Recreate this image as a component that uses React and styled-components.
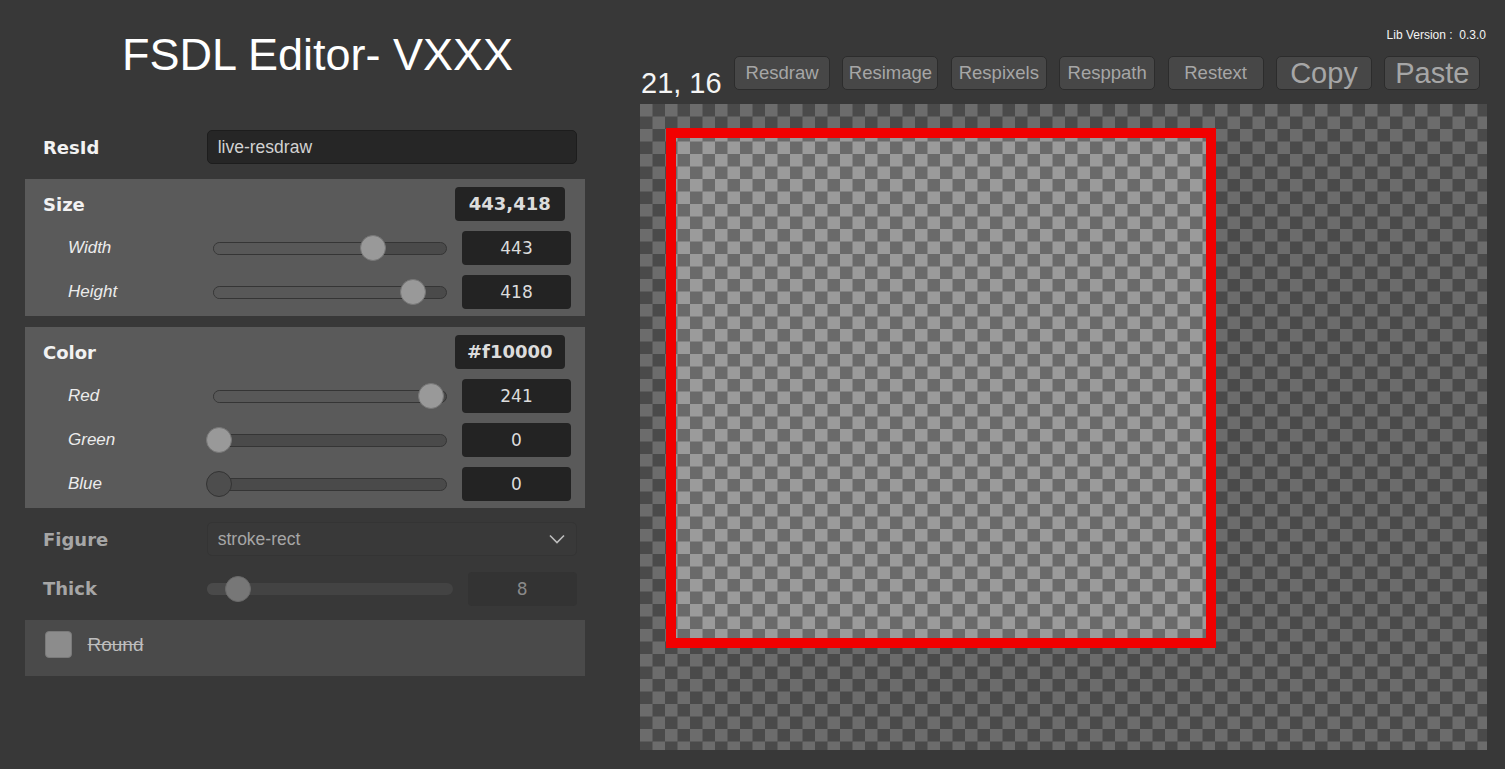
import React from "react"
import styled, { createGlobalStyle } from "styled-components"

const GlobalStyle = createGlobalStyle`
  html, body {
    margin: 0;
    padding: 0;
    background: #383838;
  }
  body {
    font-family: "Liberation Sans", Arial, sans-serif;
    color: #eee;
  }
`

const Page = styled.div`
  display: flex;
  width: 1505px;
  height: 769px;
  overflow: hidden;
`

const LeftColumn = styled.div`
  flex: 0 0 635px;
  width: 635px;
  padding-top: 32px;
  box-sizing: border-box;
`

const Title = styled.h1`
  margin: 0;
  height: 45px;
  font-family: "Liberation Sans", Arial, sans-serif;
  font-weight: normal;
  font-size: 45px;
  line-height: 45px;
  color: #fff;
  text-align: center;
`

const Form = styled.div`
  margin-top: 53px;
  padding: 0 50px 0 25px;
  display: flex;
  flex-direction: column;
`

const FieldRow = styled.div`
  display: flex;
  align-items: center;
  height: ${p => p.$height || 34}px;
  margin-top: ${p => p.$gap || 0}px;
  padding: 0 8.3px 0 18px;
`

const FieldLabel = styled.div`
  flex: 0 0 auto;
  width: 163.7px;
  font-family: "DejaVu Sans", sans-serif;
  font-weight: bold;
  font-size: 18px;
  color: ${p => (p.$muted ? "#a6a6a6" : "#f2f2f2")};
`

const TextInput = styled.div`
  flex: 0 0 auto;
  width: 370px;
  height: 34px;
  box-sizing: border-box;
  padding-left: 10px;
  background: #262626;
  border: 1px solid #1d1d1d;
  border-radius: 5px;
  font-size: 17.5px;
  line-height: 32px;
  color: #d2d2d2;
`

const Select = styled.div`
  flex: 0 0 auto;
  width: 370px;
  height: 34px;
  box-sizing: border-box;
  padding: 0 11px 0 10px;
  display: flex;
  align-items: center;
  justify-content: space-between;
  background: #393939;
  border: 1px solid #343434;
  border-radius: 5px;
  font-size: 17.5px;
  color: #a6a6a6;
`

const Panel = styled.section`
  margin-top: ${p => p.$gap}px;
  padding: 8px 14px 7px 18px;
  background: #5a5a5a;
  display: flex;
  flex-direction: column;
  gap: 10px;
`

const PanelHeader = styled.div`
  display: flex;
  align-items: center;
  justify-content: space-between;
  height: 34px;
  padding-right: 6.5px;
`

const SubRow = styled.div`
  display: flex;
  align-items: center;
  height: 34px;
  padding-left: 25px;
`

const SubLabel = styled.div`
  flex: 0 0 auto;
  width: 145px;
  font-style: italic;
  font-size: 17px;
  color: #ececec;
`

const ValueBox = styled.div`
  flex: 0 0 auto;
  width: ${p => (p.$head ? 109.5 : 109)}px;
  height: 34px;
  margin-left: ${p => p.$offset || 0}px;
  box-sizing: border-box;
  border-radius: 4px;
  background: ${p => (p.$muted ? "#333" : "#232323")};
  text-align: center;
  font-family: "DejaVu Sans", sans-serif;
  font-weight: ${p => (p.$head ? "bold" : "normal")};
  font-size: ${p => (p.$head ? 18 : 17)}px;
  line-height: 34px;
  color: ${p => (p.$muted ? "#8a8a8a" : "#dcdcdc")};
`

const Track = styled.div`
  position: relative;
  flex: 0 0 auto;
  width: ${p => p.$width}px;
  height: ${p => (p.$muted ? 12 : 13)}px;
  box-sizing: border-box;
  border-radius: 7px;
  background: ${p => (p.$muted ? "#434343" : "#4a4a4a")};
  border: ${p => (p.$muted ? "none" : "1px solid #353535")};
`

const TrackFill = styled.div`
  position: absolute;
  left: 0;
  top: 0;
  bottom: 0;
  border-radius: 7px;
  background: ${p => (p.$muted ? "#4a4a4a" : "#585858")};
`

const Thumb = styled.div`
  position: absolute;
  top: 50%;
  width: 26px;
  height: 26px;
  margin-top: -13px;
  box-sizing: border-box;
  border-radius: 50%;
  background: ${p => (p.$dark ? "#4d4d4d" : p.$muted ? "#777" : "#999")};
  border: 1px solid ${p => (p.$dark ? "#333" : p.$muted ? "#6a6a6a" : "#777")};
`

const RoundPanel = styled.section`
  margin-top: 14px;
  height: 56px;
  box-sizing: border-box;
  padding: 11px 20px 0 20px;
  background: #4a4a4a;
  display: flex;
  align-items: flex-start;
  gap: 15.5px;
`

const Checkbox = styled.div`
  width: 27px;
  height: 27px;
  box-sizing: border-box;
  border-radius: 4px;
  background: #8c8c8c;
  border: 1px solid #7a7a7a;
`

const CheckLabel = styled.span`
  font-size: 19px;
  line-height: 27px;
  color: #bdbdbd;
  text-decoration: line-through;
`

const RightColumn = styled.div`
  flex: 0 0 847px;
  width: 847px;
  margin-left: 5px;
  padding-top: 28px;
  display: flex;
  flex-direction: column;
`

const LibVersion = styled.div`
  font-size: 12px;
  line-height: 14px;
  color: #f4f4f4;
  text-align: right;
  padding-right: 1px;
  white-space: pre;
`

const Toolbar = styled.div`
  margin-top: 14px;
  display: flex;
  align-items: flex-start;
  gap: 12.4px;
`

const Coords = styled.div`
  padding-top: 13px;
  padding-left: 1px;
  margin-right: 0;
  font-size: 29px;
  line-height: 29px;
  color: #f4f4f4;
`

const ToolButton = styled.button`
  width: 96px;
  height: 34px;
  padding: 0;
  box-sizing: border-box;
  background: #474747;
  border: 1px solid #2c2c2c;
  border-radius: 5px;
  font-family: "Liberation Sans", Arial, sans-serif;
  font-size: ${p => (p.$big ? 29 : 18.5)}px;
  line-height: 32px;
  color: #a6a6a6;
  cursor: pointer;
`

const Canvas = styled.div`
  margin-top: 6px;
  width: 847px;
  height: 646px;
  line-height: 0;
`

const Chevron = () => (
  <svg width="16" height="10" viewBox="0 0 16 10">
    <polyline points="1,1.5 8,8.5 15,1.5" fill="none" stroke="#bdbdbd" strokeWidth="1.6" />
  </svg>
)

function Slider({ width, pos, muted, dark }) {
  const left = -8 + pos * (width - 22.5)
  return (
    <Track $width={width} $muted={muted}>
      <TrackFill $muted={muted} style={{ width: Math.max(0, left + 13) }} />
      <Thumb $muted={muted} $dark={dark} style={{ left }} />
    </Track>
  )
}

const sizeRows = [
  { label: "Width", value: 443, pos: 0.728 },
  { label: "Height", value: 418, pos: 0.918 },
]

const colorRows = [
  { label: "Red", value: 241, pos: 1 },
  { label: "Green", value: 0, pos: 0 },
  { label: "Blue", value: 0, pos: 0, dark: true },
]

const buttons = ["Resdraw", "Resimage", "Respixels", "Resppath", "Restext"]

function SliderRow({ row }) {
  return (
    <SubRow>
      <SubLabel>{row.label}</SubLabel>
      <Slider width={234} pos={row.pos} dark={row.dark} />
      <ValueBox $offset={15}>{row.value}</ValueBox>
    </SubRow>
  )
}

function DrawCanvas() {
  return (
    <svg width="847" height="646">
      <defs>
        <pattern id="checker" width="25" height="25" patternUnits="userSpaceOnUse">
          <rect width="25" height="25" fill="#6a6a6a" />
          <rect width="12.5" height="12.5" fill="#9b9b9b" />
          <rect x="12.5" y="12.5" width="12.5" height="12.5" fill="#9b9b9b" />
        </pattern>
      </defs>
      <rect width="847" height="646" fill="url(#checker)" />
      <path d="M0 0H847V646H0Z M36 34V534H566V34Z" fill="rgba(0,0,0,0.3)" fillRule="evenodd" />
      <rect x="31" y="29" width="540" height="510" fill="none" stroke="#f10000" strokeWidth="10" />
    </svg>
  )
}

export default function App() {
  return (
    <>
      <GlobalStyle />
      <Page>
        <LeftColumn>
          <Title>FSDL Editor- VXXX</Title>
          <Form>
            <FieldRow>
              <FieldLabel>ResId</FieldLabel>
              <TextInput>live-resdraw</TextInput>
            </FieldRow>

            <Panel $gap={15}>
              <PanelHeader>
                <FieldLabel>Size</FieldLabel>
                <ValueBox $head>443,418</ValueBox>
              </PanelHeader>
              {sizeRows.map(row => (
                <SliderRow key={row.label} row={row} />
              ))}
            </Panel>

            <Panel $gap={11}>
              <PanelHeader>
                <FieldLabel>Color</FieldLabel>
                <ValueBox $head>#f10000</ValueBox>
              </PanelHeader>
              {colorRows.map(row => (
                <SliderRow key={row.label} row={row} />
              ))}
            </Panel>

            <FieldRow $gap={14}>
              <FieldLabel $muted>Figure</FieldLabel>
              <Select>
                <span>stroke-rect</span>
                <Chevron />
              </Select>
            </FieldRow>

            <FieldRow $gap={15} $height={35}>
              <FieldLabel $muted>Thick</FieldLabel>
              <Slider width={246} pos={0.118} muted />
              <ValueBox $offset={15} $muted>8</ValueBox>
            </FieldRow>

            <RoundPanel>
              <Checkbox />
              <CheckLabel>Round</CheckLabel>
            </RoundPanel>
          </Form>
        </LeftColumn>

        <RightColumn>
          <LibVersion>{"Lib Version :  0.3.0"}</LibVersion>
          <Toolbar>
            <Coords>21, 16</Coords>
            {buttons.map(b => (
              <ToolButton key={b}>{b}</ToolButton>
            ))}
            <ToolButton $big>Copy</ToolButton>
            <ToolButton $big>Paste</ToolButton>
          </Toolbar>
          <Canvas>
            <DrawCanvas />
          </Canvas>
        </RightColumn>
      </Page>
    </>
  )
}
